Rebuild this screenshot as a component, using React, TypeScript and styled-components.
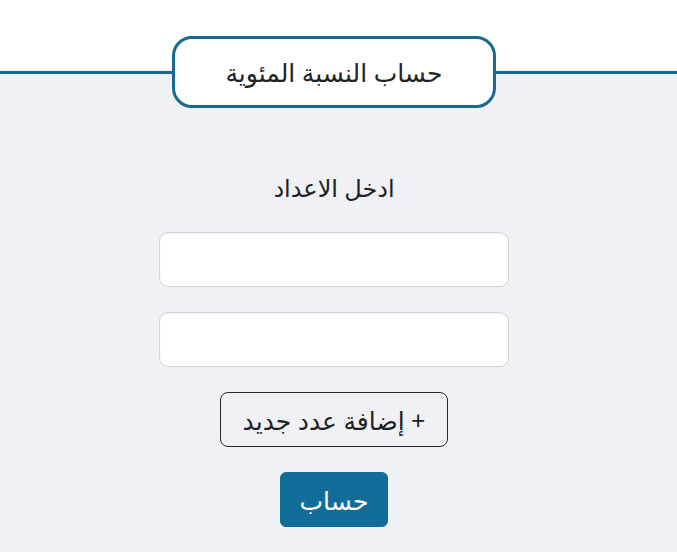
import React from "react";
import styled, { createGlobalStyle } from "styled-components";

const Global = createGlobalStyle`
  html, body { margin: 0; padding: 0; }
  body {
    background: #f0f1f5;
    font-family: "Noto Sans", "DejaVu Sans", sans-serif;
    color: #222;
  }
`;

const Page = styled.div`
  min-height: 552px;
  background: linear-gradient(to bottom, #ffffff 70px, #f0f1f5 70px);
  padding-top: 36px;
  box-sizing: border-box;
  display: flex;
  flex-direction: column;
  align-items: center;
`;

const TitleRow = styled.div`
  width: 100%;
  display: flex;
  align-items: center;
`;

const Rule = styled.div<{ $extra?: number }>`
  flex: 1 1 ${(p) => p.$extra ?? 0}px;
  height: 3px;
  background: #17698f;
`;

const TitleBox = styled.h1`
  margin: 0;
  width: 324px;
  height: 72px;
  box-sizing: border-box;
  border: 3px solid #17698f;
  border-radius: 20px;
  background: #fff;
  display: flex;
  align-items: center;
  justify-content: center;
  font-size: 25px;
  font-weight: 400;
  color: #222;
`;

const Form = styled.div`
  direction: rtl;
  display: flex;
  flex-direction: column;
  align-items: center;
  margin-top: 61px;
  margin-right: 9px;
`;

const Label = styled.label`
  font-size: 24px;
  line-height: 38px;
  color: #222;
  margin-bottom: 25px;
`;

const Inputs = styled.div`
  display: flex;
  flex-direction: column;
  gap: 25px;
`;

const NumberInput = styled.input`
  width: 350px;
  height: 55px;
  box-sizing: border-box;
  border: 1px solid #d3d4d8;
  border-radius: 9px;
  background: #fff;
  box-shadow: inset 0 1px 2px rgba(0, 0, 0, 0.06);
  font-size: 18px;
  padding: 0 12px;
  outline: none;
`;

const Button = styled.button<{ $primary?: boolean }>`
  margin-top: ${(p) => (p.$primary ? "25px" : "25px")};
  height: 55px;
  box-sizing: border-box;
  padding: 0;
  width: ${(p) => (p.$primary ? "108px" : "228px")};
  border-radius: ${(p) => (p.$primary ? "6px" : "8px")};
  border: 1px solid ${(p) => (p.$primary ? "#0f6d97" : "#2a2a2a")};
  background: ${(p) => (p.$primary ? "#0f6d97" : "transparent")};
  color: ${(p) => (p.$primary ? "#fff" : "#222")};
  font-family: "Noto Sans", "DejaVu Sans", sans-serif;
  font-size: ${(p) => (p.$primary ? "25px" : "25px")};
  cursor: pointer;
`;

export default function App() {
  return (
    <>
      <Global />
      <Page>
        <TitleRow>
          <Rule />
          <TitleBox dir="rtl">حساب النسبة المئوية</TitleBox>
          <Rule $extra={9} />
        </TitleRow>
        <Form>
          <Label>ادخل الاعداد</Label>
          <Inputs>
            <NumberInput type="text" />
            <NumberInput type="text" />
          </Inputs>
          <Button>+ إضافة عدد جديد</Button>
          <Button $primary>حساب</Button>
        </Form>
      </Page>
    </>
  );
}
